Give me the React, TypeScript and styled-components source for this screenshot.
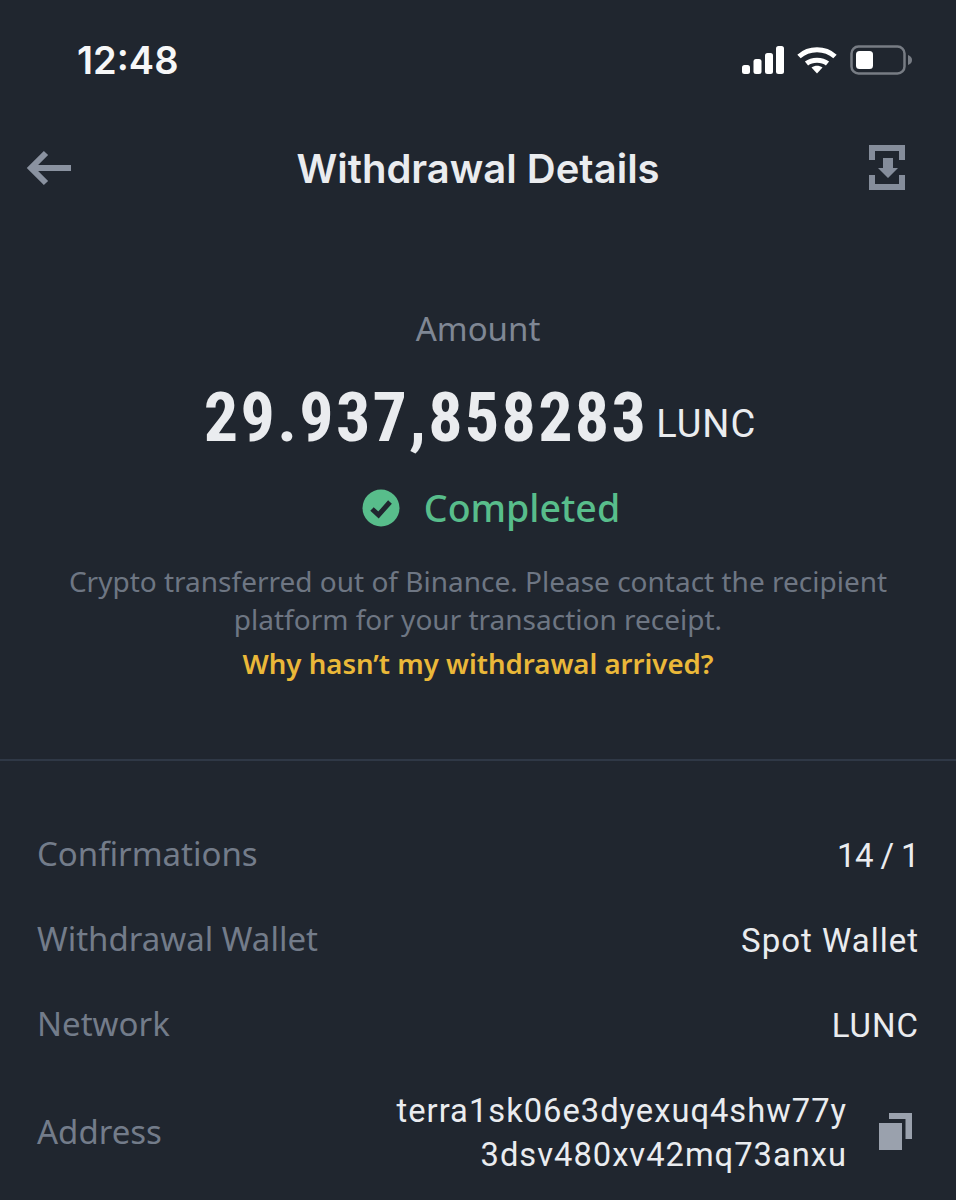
import styled, { createGlobalStyle } from 'styled-components'

const GlobalStyle = createGlobalStyle`
  html, body {
    margin: 0;
    padding: 0;
    background: #20262f;
  }
`

const Page = styled.div`
  width: 956px;
  height: 1200px;
  overflow: hidden;
  background: #20262f;
  font-family: "Noto Sans", "Liberation Sans", sans-serif;
`

const StatusBar = styled.div`
  height: 120px;
  padding: 0 44px 0 77px;
  box-sizing: border-box;
  display: flex;
  align-items: center;
  justify-content: space-between;
`

const Time = styled.div`
  font-family: Inter, sans-serif;
  font-size: 38px;
  font-weight: 600;
  color: #f6f7f8;
`

const StatusIcons = styled.div`
  display: flex;
  align-items: center;
  gap: 13px;
`

const NavBar = styled.div`
  height: 96px;
  padding: 0 26px;
  display: grid;
  grid-template-columns: 1fr auto 1fr;
  align-items: center;
`

const NavEnd = styled.div`
  display: flex;
  justify-content: ${p => (p.$right ? 'flex-end' : 'flex-start')};
  padding-right: ${p => (p.$right ? '25px' : '0')};
  padding-bottom: ${p => (p.$right ? '2px' : '0')};
`

const NavTitle = styled.div`
  font-family: Inter, sans-serif;
  font-size: 40px;
  font-weight: 600;
  color: #eaecef;
`

const Summary = styled.div`
  display: flex;
  flex-direction: column;
  align-items: center;
  padding-top: 93px;
  height: 545px;
  box-sizing: border-box;
  border-bottom: 2px solid #2f3846;
`

const AmountLabel = styled.div`
  font-size: 33px;
  line-height: 40px;
  color: #7f8794;
`

const AmountRow = styled.div`
  display: flex;
  align-items: center;
  gap: 8px;
  margin-top: 33px;
  padding-left: 4px;
  color: #eaecef;
`

const AmountValue = styled.div`
  font-family: Roboto, sans-serif;
  font-size: 68px;
  line-height: 72px;
  font-weight: 700;
  font-stretch: 85%;
  letter-spacing: 2.3px;
`

const AmountUnit = styled.div`
  font-family: Roboto, sans-serif;
  font-size: 38px;
  font-weight: 400;
  letter-spacing: 1px;
  margin-top: 12px;
`

const StatusRow = styled.div`
  display: flex;
  align-items: center;
  gap: 24px;
  margin-top: 29px;
  padding-left: 26px;
  font-size: 37.5px;
  line-height: 50px;
  font-weight: 500;
  color: #58bd8b;
`

const Notice = styled.div`
  margin-top: 29px;
  font-size: 28px;
  line-height: 38px;
  text-align: center;
  color: #6e7683;
`

const HelpLink = styled.div`
  margin-top: 6px;
  font-size: 27.6px;
  line-height: 38px;
  font-weight: 600;
  color: #eab839;
`

const Details = styled.div`
  padding: 50px 37px 0;
  display: flex;
  flex-direction: column;
`

const Row = styled.div`
  min-height: 85px;
  display: flex;
  align-items: center;
  justify-content: space-between;
`

const AddressRow = styled(Row)`
  padding: 19px 0;
`

const Label = styled.div`
  font-size: 33px;
  color: #737c8a;
`

const Value = styled.div`
  font-family: Roboto, sans-serif;
  font-size: 33px;
  color: #eaecef;
  letter-spacing: ${p => (p.$tight ? '-0.6px' : '1px')};
  padding-top: 3px;
`

const AddressWrap = styled.div`
  display: flex;
  align-items: center;
  gap: 32px;
  margin-right: 7px;
`

const AddressText = styled.div`
  font-family: Roboto, sans-serif;
  font-size: 32.7px;
  line-height: 44px;
  text-align: right;
  color: #eaecef;
  letter-spacing: 1px;
  padding-top: 4px;
`

export default function App() {
  return (
    <Page>
      <GlobalStyle />
      <StatusBar>
        <Time>12:48</Time>
        <StatusIcons>
          <svg width="42" height="28" viewBox="0 0 42 28" fill="#fff">
            <rect x="0" y="19" width="8" height="9" rx="2.5" />
            <rect x="11.5" y="13" width="8" height="15" rx="2.5" />
            <rect x="23" y="7" width="8" height="21" rx="2.5" />
            <rect x="34" y="0" width="8" height="28" rx="2.5" />
          </svg>
          <svg width="40" height="28" viewBox="0 0 40 28" fill="none" stroke="#fff" strokeWidth="5">
            <path d="M2 10.5 C12 1.5 28 1.5 38 10.5" />
            <path d="M9.5 17.5 C15 13 25 13 30.5 17.5" />
            <path d="M14.5 21.5 L20 27.5 L25.5 21.5 C22 19 18 19 14.5 21.5Z" fill="#fff" stroke="none" />
          </svg>
          <svg width="62" height="30" viewBox="0 0 62 30" fill="none">
            <rect x="1.5" y="1.5" width="53" height="27" rx="7" stroke="#777c84" strokeWidth="2.5" />
            <rect x="6" y="6" width="17" height="18" rx="3.5" fill="#fff" />
            <path d="M58 10 C61 11 62 13 62 15 C62 17 61 19 58 20Z" fill="#777c84" />
          </svg>
        </StatusIcons>
      </StatusBar>
      <NavBar>
        <NavEnd>
          <svg width="46" height="36" viewBox="0 0 46 36" fill="none" stroke="#8a92a0" strokeWidth="6">
            <path d="M45 18 H6" />
            <path d="M20 3 L5 18 L20 33" />
          </svg>
        </NavEnd>
        <NavTitle>Withdrawal Details</NavTitle>
        <NavEnd $right>
          <svg width="36" height="45" viewBox="0 0 36 45" fill="#858d9b">
            <path d="M0 0 H36 V15 H30 V6 H6 V15 H0 Z" />
            <path d="M0 30 H6 V39 H30 V30 H36 V45 H0 Z" />
            <path d="M14 13 H24 V23 H29 L19 33 L9 23 H14 Z" />
          </svg>
        </NavEnd>
      </NavBar>
      <Summary>
        <AmountLabel>Amount</AmountLabel>
        <AmountRow>
          <AmountValue>29.937,858283</AmountValue>
          <AmountUnit>LUNC</AmountUnit>
        </AmountRow>
        <StatusRow>
          <svg width="38" height="38" viewBox="0 0 38 38">
            <circle cx="19" cy="19" r="18.5" fill="#58bd8b" />
            <path d="M10 20 L16.5 26 L28 13" fill="none" stroke="#20262f" strokeWidth="5" />
          </svg>
          Completed
        </StatusRow>
        <Notice>
          Crypto transferred out of Binance. Please contact the recipient
          <br />
          platform for your transaction receipt.
        </Notice>
        <HelpLink>Why hasn’t my withdrawal arrived?</HelpLink>
      </Summary>
      <Details>
        <Row>
          <Label>Confirmations</Label>
          <Value $tight>14 / 1</Value>
        </Row>
        <Row>
          <Label>Withdrawal Wallet</Label>
          <Value>Spot Wallet</Value>
        </Row>
        <Row>
          <Label>Network</Label>
          <Value>LUNC</Value>
        </Row>
        <AddressRow>
          <Label>Address</Label>
          <AddressWrap>
            <AddressText>
              terra1sk06e3dyexuq4shw77y
              <br />
              3dsv480xv42mq73anxu
            </AddressText>
            <svg width="33" height="37" viewBox="0 0 33 37" fill="#9aa1ad">
              <rect x="0" y="10" width="23" height="27" />
              <path d="M10 0 H33 V26 H26.5 V6 H10 Z" />
            </svg>
          </AddressWrap>
        </AddressRow>
      </Details>
    </Page>
  )
}
